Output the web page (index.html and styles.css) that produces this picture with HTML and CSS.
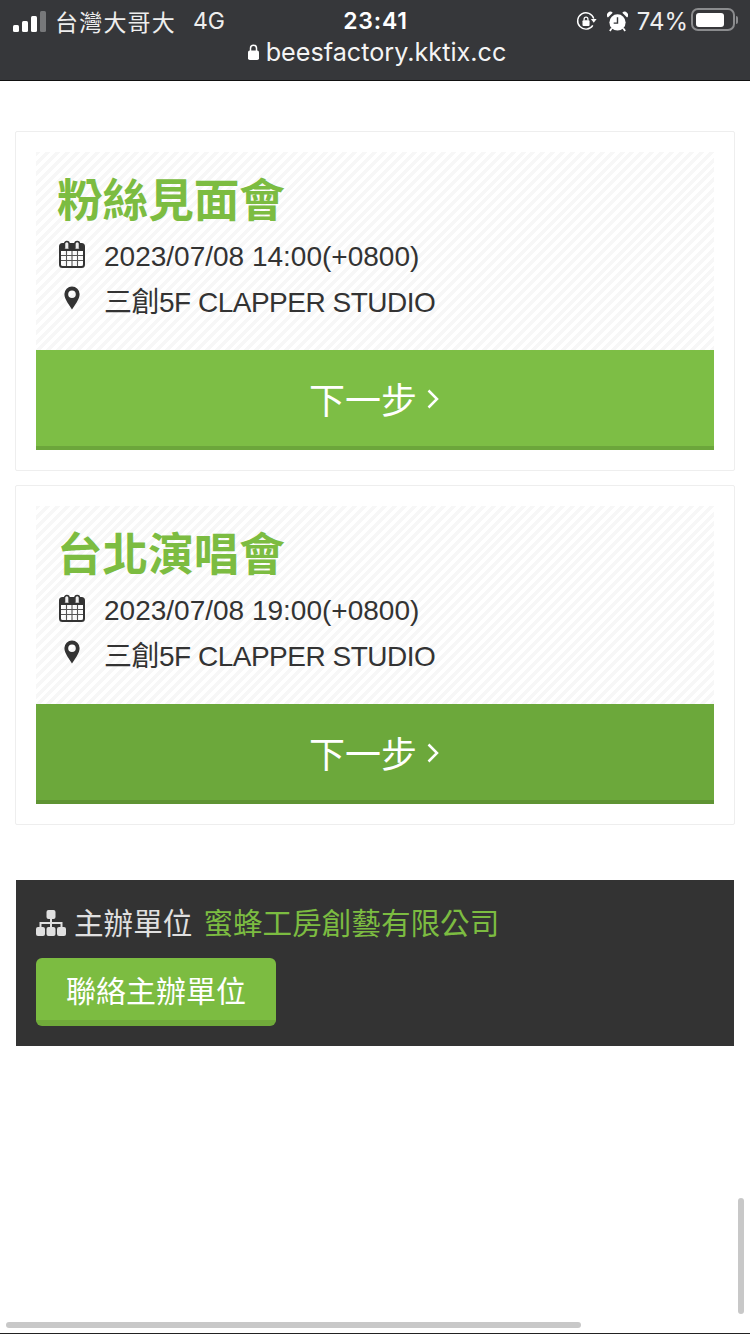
FILE: index.html
```html
<!DOCTYPE html>
<html lang="zh-Hant">
<head>
<meta charset="utf-8">
<title>beesfactory.kktix.cc</title>
<link rel="stylesheet" href="styles.css">
</head>
<body>
<header class="browser-bar">
  <div class="status-row">
    <div class="status-left">
      <span class="signal"><i class="b1"></i><i class="b2"></i><i class="b3"></i><i class="b4"></i></span>
      <span class="carrier">台灣大哥大</span>
      <span class="network">4G</span>
    </div>
    <div class="clock">23:41</div>
    <div class="status-right">
      <svg class="ico-lock-rot" viewBox="0 0 22 22" width="21" height="21"><path d="M17.6 15A8.600 8.600 0 1 1 18.600 8" fill="none" stroke="#fff" stroke-width="1.500"/><path d="M15.600 8.400h6L18.600 12.400z" fill="#fff"/><rect x="6.800" y="9.800" width="7.400" height="5.800" rx="1" fill="#fff"/><path d="M8.500 10V8.400a2 2 0 0 1 4 0V10" fill="none" stroke="#fff" stroke-width="1.300"/></svg>
      <svg class="ico-alarm" viewBox="0 0 22 22" width="21" height="21"><circle cx="11" cy="12" r="8.500" fill="#fff"/><path d="M11 6.500v6.200H7" fill="none" stroke="#36373a" stroke-width="1.500"/><path d="M1 6.800 6 1.800A3.400 3.400 0 0 0 1 6.800zM21 6.800 16 1.800A3.400 3.400 0 0 1 21 6.800z" fill="#fff"/><path d="M5 18l-2 3M17 18l2 3" stroke="#fff" stroke-width="1.800"/></svg>
      <span class="percent">74%</span>
      <span class="battery"><span class="battery-fill"></span></span><span class="battery-cap"></span>
    </div>
  </div>
  <div class="url-row">
    <svg class="ico-lock" viewBox="0 0 11 16" width="11" height="16"><rect x="0" y="6.400" width="11" height="9.600" rx="1.800" fill="#fff"/><path d="M2.500 7V4.300a3 3 0 0 1 6 0V7" fill="none" stroke="#fff" stroke-width="1.500"/></svg>
    <span>beesfactory.kktix.cc</span>
  </div>
</header>

<main class="page">
  <section class="card">
    <div class="event-info">
      <h2 class="event-title">粉絲見面會</h2>
      <div class="info-row date-row">
        <svg class="ico-cal" viewBox="0 0 26 28" width="26" height="28"><use href="#cal"/></svg>
        <span>2023/07/08 14:00(+0800)</span>
      </div>
      <div class="info-row place-row">
        <svg class="ico-pin" viewBox="0 0 16 24" width="16" height="24"><use href="#pin"/></svg>
        <span>三創5F CLAPPER STUDIO</span>
      </div>
    </div>
    <a class="next-btn">下一步<svg class="chev" viewBox="0 0 12 20" width="12" height="20"><path d="M1.500 1.500 10 10 1.500 18.500" fill="none" stroke="#fff" stroke-width="2.500"/></svg></a>
  </section>

  <section class="card">
    <div class="event-info">
      <h2 class="event-title">台北演唱會</h2>
      <div class="info-row date-row">
        <svg class="ico-cal" viewBox="0 0 26 28" width="26" height="28"><use href="#cal"/></svg>
        <span>2023/07/08 19:00(+0800)</span>
      </div>
      <div class="info-row place-row">
        <svg class="ico-pin" viewBox="0 0 16 24" width="16" height="24"><use href="#pin"/></svg>
        <span>三創5F CLAPPER STUDIO</span>
      </div>
    </div>
    <a class="next-btn next-btn-hover">下一步<svg class="chev" viewBox="0 0 12 20" width="12" height="20"><path d="M1.500 1.500 10 10 1.500 18.500" fill="none" stroke="#fff" stroke-width="2.500"/></svg></a>
  </section>

  <section class="organizer">
    <div class="org-line">
      <svg class="ico-org" viewBox="0 0 30 26" width="30" height="26"><g fill="#e0e0e0"><rect x="10.500" y="0" width="9" height="9" rx="2"/><rect x="0" y="17" width="9" height="9" rx="2"/><rect x="10.500" y="17" width="9" height="9" rx="2"/><rect x="21" y="17" width="9" height="9" rx="2"/></g><path d="M15 9v8M4.500 17v-4h21v4" fill="none" stroke="#e0e0e0" stroke-width="2"/></svg>
      <span class="org-label">主辦單位</span>
      <a class="org-name">蜜蜂工房創藝有限公司</a>
    </div>
    <a class="contact-btn">聯絡主辦單位</a>
  </section>
</main>

<div class="scroll-v"></div>
<div class="scroll-h"></div>
<div class="bottom-line"></div>

<svg class="defs" width="0" height="0">
  <defs>
    <g id="cal">
      <rect x="1" y="4" width="24" height="23" rx="2.500" fill="none" stroke="#333" stroke-width="2"/>
      <rect x="1" y="4" width="24" height="7" fill="#333"/>
      <path fill="#eee" stroke="#333" stroke-width="1.500" d="M5.500 8V3a2.300 2.300 0 0 1 4.600 0v5M15.900 8V3a2.300 2.300 0 0 1 4.600 0v5" transform="translate(0 .8)"/>
      <path fill="none" stroke="#555" stroke-width="1.100" d="M7.500 11v15M13 11v15M18.500 11v15M2 15.500h22M2 20.500h22"/>
    </g>
    <g id="pin">
      <path fill="#333" fill-rule="evenodd" d="M8 .5a7.600 7.600 0 0 1 7.600 7.600c0 3-1 5-3 8.400L8 23.500 3.400 16.500C1.400 13.100.4 11.100.4 8.100A7.600 7.600 0 0 1 8 .5zM8 4.400a3.800 3.800 0 1 0 0 7.600 3.800 3.800 0 0 0 0-7.600z"/>
    </g>
  </defs>
</svg>
</body>
</html>
```
FILE: styles.css
```css
* { box-sizing: border-box; }
html, body { margin: 0; padding: 0; }
body {
  position: relative;
  width: 750px;
  height: 1334px;
  overflow: hidden;
  background: #fff;
  color: #333;
  font-family: "Liberation Sans", "Noto Sans CJK TC", sans-serif;
}
.defs { position: absolute; }

.browser-bar {
  height: 81px;
  background: #36373a;
  border-bottom: 1px solid #111;
  color: #fff;
  font-family: Inter, "Noto Sans CJK TC", sans-serif;
}
.status-row {
  display: grid;
  grid-template-columns: 1fr auto 1fr;
  align-items: center;
  height: 42px;
  padding: 0 12px 0 13px;
}
.status-left, .status-right { display: flex; align-items: center; }
.status-right { justify-content: flex-end; }
.signal { display: flex; align-items: flex-end; gap: 3px; height: 21px; margin-right: 9px; }
.signal i { display: block; width: 6px; border-radius: 1.500px; background: #fff; }
.signal .b1 { height: 7px; }
.signal .b2 { height: 11px; }
.signal .b3 { height: 16px; }
.signal .b4 { height: 21px; background: #77787a; }
.carrier { font-size: 23px; letter-spacing: 1.200px; color: #eee; }
.network { font-size: 23px; margin-left: 17px; color: #eee; }
.clock { font-size: 23px; font-weight: 600; letter-spacing: .8px; }
.ico-lock-rot { margin-right: 10px; }
.ico-alarm { margin-right: 9px; }
.percent { font-size: 24px; color: #eee; margin-right: 3px; }
.battery {
  display: flex;
  align-items: center;
  width: 44px;
  height: 23px;
  margin-top: -3px;
  padding: 3px;
  border: 2px solid #8b8c8e;
  border-radius: 7px;
}
.battery-fill { width: 28px; height: 14px; background: #fff; border-radius: 3px; }
.battery-cap { width: 2px; height: 8px; margin-left: 1px; margin-top: -3px; background: #8b8c8e; border-radius: 0 2px 2px 0; }
.url-row {
  display: flex;
  justify-content: center;
  align-items: center;
  gap: 7px;
  height: 24px;
  margin-top: -2px;
  padding-left: 4px;
  font-size: 25.200px;
  color: #f4f4f4;
}

.page { padding: 50px 15px 0; }
.card {
  height: 340px;
  margin-bottom: 14px;
  padding: 20px;
  background: #fff;
  border: 1px solid #eee;
  border-radius: 2px;
}
.event-info {
  height: 198px;
  padding: 24px 21px 0;
  background: repeating-linear-gradient(135deg, #f7f7f7 0 3.500px, #fff 3.500px 7px);
}
.event-title {
  margin: 0;
  font-size: 45.600px;
  line-height: 52px;
  font-weight: 700;
  color: #7cbc41;
}
.info-row {
  display: flex;
  align-items: center;
  height: 46px;
  font-size: 28px;
  color: #333;
}
.date-row { margin-top: 6px; }
.ico-cal { margin-left: 2px; margin-top: -6px; flex: none; }
.date-row span { margin-left: 19px; }
.place-row { margin-top: -3px; }
.ico-pin { margin-left: 7px; margin-top: -5px; flex: none; }
.place-row span { margin-left: 24px; letter-spacing: -.5px; }

.next-btn {
  display: flex;
  justify-content: center;
  align-items: center;
  gap: 10px;
  height: 100px;
  padding-right: 2px;
  background: #7dbe45;
  border-bottom: 4px solid #6ca63b;
  color: #fff;
  font-size: 36px;
}
.next-btn-hover { background: #6ca83b; border-bottom-color: #5f9433; }
.chev { margin-top: 2px; }

.organizer {
  height: 166px;
  margin: 55px 1px 0;
  padding: 20px 20px 0;
  background: #333;
}
.org-line {
  display: flex;
  align-items: center;
  height: 42px;
  font-size: 29.600px;
}
.ico-org { margin-top: 4px; flex: none; }
.org-label { margin-left: 8px; color: #e0e0e0; }
.org-name { margin-left: 11px; color: #7cbc41; }
.contact-btn {
  display: flex;
  justify-content: center;
  align-items: center;
  width: 240px;
  height: 68px;
  margin-top: 16px;
  background: #7cbc41;
  border-bottom: 6px solid #70ab3a;
  border-radius: 6px;
  color: #fff;
  font-size: 30px;
}

.scroll-v {
  position: absolute;
  right: 6px;
  top: 1198px;
  width: 6px;
  height: 116px;
  border-radius: 3px;
  background: #c8c8c8;
}
.scroll-h {
  position: absolute;
  left: 6px;
  top: 1322px;
  width: 575px;
  height: 6px;
  border-radius: 3px;
  background: #c8c8c8;
}
.bottom-line {
  position: absolute;
  left: 0;
  right: 0;
  bottom: 0;
  height: 1px;
  background: #222;
}
```
